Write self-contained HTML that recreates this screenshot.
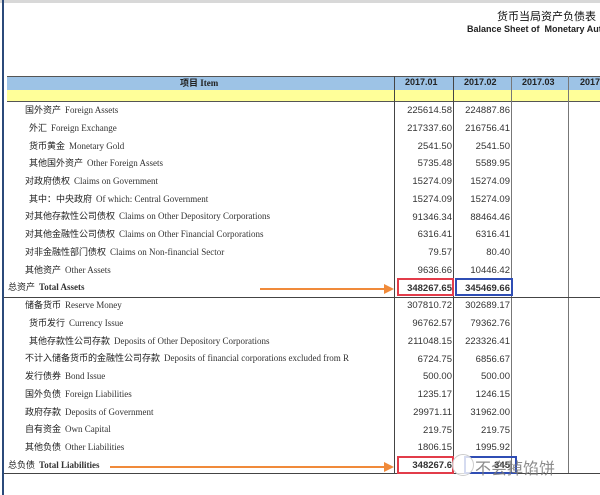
<!DOCTYPE html>
<html><head><meta charset="utf-8"><style>
body{margin:0;width:600px;height:495px;overflow:hidden;background:#fff;position:relative;font-family:"Liberation Serif","Noto Serif CJK SC",serif;}
.a{position:absolute;}
.t{position:absolute;font-size:9px;color:#333;white-space:nowrap;line-height:12px;}
.t b{font-family:"Noto Sans CJK SC",sans-serif;font-weight:normal;color:#222;margin-right:4px;}
.n{position:absolute;font-family:"Liberation Sans",sans-serif;font-size:9.5px;color:#333;text-align:right;}
.v{position:absolute;width:1px;background:#444;}
.h{position:absolute;top:76px;font-size:9px;font-weight:bold;color:#222;font-family:'Liberation Sans',sans-serif;line-height:13px}
.box{position:absolute;box-sizing:border-box;height:18px;}
</style></head><body>
<div class="a" style="left:0;top:0;width:600px;height:3px;background:#d8d8d8"></div>
<div class="a" style="left:2px;top:0;width:2px;height:495px;background:#2b4a7a"></div>
<div class="a" style="left:497px;top:8px;font-family:'Noto Sans CJK SC',sans-serif;font-size:11px;color:#111;">货币当局资产负债表</div>
<div class="a" style="left:467px;top:24px;font-family:'Liberation Sans',sans-serif;font-size:9px;font-weight:bold;color:#222;white-space:nowrap">Balance Sheet of &nbsp;Monetary Aut</div>
<div class="a" style="left:7px;top:76px;width:593px;height:13px;background:#9dc3e6;border-top:1px solid #555;border-bottom:1px solid #555"></div>
<div class="a" style="left:7px;top:90px;width:593px;height:11px;background:#ffff99;border-bottom:1px solid #555"></div>
<div class="h" style="left:180px;font-family:'Liberation Serif',serif"><span style="font-family:'Noto Sans CJK SC',sans-serif">项目</span> Item</div>
<div class="h" style="left:405px">2017.01</div>
<div class="h" style="left:464px">2017.02</div>
<div class="h" style="left:522px">2017.03</div>
<div class="h" style="left:580px">2017</div>
<div class="v" style="left:394px;top:76px;height:398px"></div>
<div class="v" style="left:453px;top:76px;height:398px"></div>
<div class="v" style="left:511px;top:76px;height:398px;background:#777"></div>
<div class="v" style="left:568px;top:76px;height:398px;background:#777"></div>
<div class="a" style="left:4px;top:297px;width:596px;height:1px;background:#444"></div>
<div class="a" style="left:4px;top:473px;width:596px;height:1px;background:#444"></div>

<div class="t" style="left:25px;top:104px"><b>国外资产</b>Foreign Assets</div>
<div class="t" style="left:29px;top:122px"><b>外汇</b>Foreign Exchange</div>
<div class="t" style="left:29px;top:140px"><b>货币黄金</b>Monetary Gold</div>
<div class="t" style="left:29px;top:157px"><b>其他国外资产</b>Other Foreign Assets</div>
<div class="t" style="left:25px;top:175px"><b>对政府债权</b>Claims on Government</div>
<div class="t" style="left:29px;top:193px"><b>其中：中央政府</b>Of which: Central Government</div>
<div class="t" style="left:25px;top:210px"><b>对其他存款性公司债权</b>Claims on Other Depository Corporations</div>
<div class="t" style="left:25px;top:228px"><b>对其他金融性公司债权</b>Claims on Other Financial Corporations</div>
<div class="t" style="left:25px;top:246px"><b>对非金融性部门债权</b>Claims on Non-financial Sector</div>
<div class="t" style="left:25px;top:264px"><b>其他资产</b>Other Assets</div>
<div class="t" style="left:8px;top:281px;font-weight:bold"><b>总资产</b>Total Assets</div>
<div class="t" style="left:25px;top:299px"><b>储备货币</b>Reserve Money</div>
<div class="t" style="left:29px;top:317px"><b>货币发行</b>Currency Issue</div>
<div class="t" style="left:29px;top:335px"><b>其他存款性公司存款</b>Deposits of Other Depository Corporations</div>
<div class="t" style="left:25px;top:352px"><b>不计入储备货币的金融性公司存款</b>Deposits of financial corporations excluded from R</div>
<div class="t" style="left:25px;top:370px"><b>发行债券</b>Bond Issue</div>
<div class="t" style="left:25px;top:388px"><b>国外负债</b>Foreign Liabilities</div>
<div class="t" style="left:25px;top:406px"><b>政府存款</b>Deposits of Government</div>
<div class="t" style="left:25px;top:423px"><b>自有资金</b>Own Capital</div>
<div class="t" style="left:25px;top:441px"><b>其他负债</b>Other Liabilities</div>
<div class="t" style="left:8px;top:459px;font-weight:bold"><b>总负债</b>Total Liabilities</div>

<div class="n" style="left:390px;width:62px;top:102px;line-height:17.75px">225614.58<br>217337.60<br>2541.50<br>5735.48<br>15274.09<br>15274.09<br>91346.34<br>6316.41<br>79.57<br>9636.66<br><b>348267.65</b><br>307810.72<br>96762.57<br>211048.15<br>6724.75<br>500.00<br>1235.17<br>29971.11<br>219.75<br>1806.15<br><b>348267.6</b></div>
<div class="n" style="left:448px;width:62px;top:102px;line-height:17.75px">224887.86<br>216756.41<br>2541.50<br>5589.95<br>15274.09<br>15274.09<br>88464.46<br>6316.41<br>80.40<br>10446.42<br><b>345469.66</b><br>302689.17<br>79362.76<br>223326.41<br>6856.67<br>500.00<br>1246.15<br>31962.00<br>219.75<br>1995.92<br><b>345</b></div>

<div class="box" style="left:397px;top:278px;width:57px;border:2px solid #e23c4a"></div>
<div class="box" style="left:455px;top:278px;width:58px;border:2px solid #2f4db4"></div>
<div class="box" style="left:397px;top:456px;width:57px;border:2px solid #e23c4a"></div>
<div class="box" style="left:464px;top:456px;width:53px;border:2px solid #2f4db4"></div>
<div class="a" style="left:260px;top:288px;width:128px;height:2px;background:#f08a3a"></div>
<div class="a" style="left:384px;top:284px;width:0;height:0;border-left:10px solid #f08a3a;border-top:5px solid transparent;border-bottom:5px solid transparent"></div>
<div class="a" style="left:110px;top:466px;width:278px;height:2px;background:#f08a3a"></div>
<div class="a" style="left:384px;top:462px;width:0;height:0;border-left:10px solid #f08a3a;border-top:5px solid transparent;border-bottom:5px solid transparent"></div>
<div class="a" style="left:452px;top:454px;width:20px;height:20px;border-radius:50%;background:rgba(255,255,255,.8);border:1px solid #ccc"></div>
<div class="a" style="left:475px;top:455px;font-family:'Noto Sans CJK SC',sans-serif;font-size:16px;color:rgba(120,120,120,.85);white-space:nowrap">不会掉馅饼</div>
</body></html>
